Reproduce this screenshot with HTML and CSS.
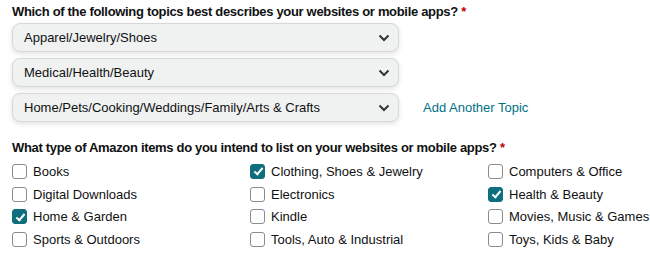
FILE: index.html
```html
<!DOCTYPE html>
<html>
<head>
<meta charset="utf-8">
<link rel="stylesheet" href="styles.css">
</head>
<body>
<div class="form">
  <div class="label">Which of the following topics best describes your websites or mobile apps? <span class="req">*</span></div>
  <div class="topics">
    <div class="topic-row">
      <div class="select"><span>Apparel/Jewelry/Shoes</span><svg class="chev" width="12" height="8" viewBox="0 0 12 8"><path d="M1.5 1.5 L6 6 L10.5 1.5" fill="none" stroke="#333" stroke-width="2"/></svg></div>
    </div>
    <div class="topic-row">
      <div class="select"><span>Medical/Health/Beauty</span><svg class="chev" width="12" height="8" viewBox="0 0 12 8"><path d="M1.5 1.5 L6 6 L10.5 1.5" fill="none" stroke="#333" stroke-width="2"/></svg></div>
    </div>
    <div class="topic-row">
      <div class="select"><span>Home/Pets/Cooking/Weddings/Family/Arts &amp; Crafts</span><svg class="chev" width="12" height="8" viewBox="0 0 12 8"><path d="M1.5 1.5 L6 6 L10.5 1.5" fill="none" stroke="#333" stroke-width="2"/></svg></div>
      <a class="add" href="#">Add Another Topic</a>
    </div>
  </div>

  <div class="label label2">What type of Amazon items do you intend to list on your websites or mobile apps? <span class="req">*</span></div>
  <div class="grid">
    <label class="cb"><span class="box"></span>Books</label>
    <label class="cb"><span class="box on"></span>Clothing, Shoes &amp; Jewelry</label>
    <label class="cb"><span class="box"></span>Computers &amp; Office</label>
    <label class="cb"><span class="box"></span>Digital Downloads</label>
    <label class="cb"><span class="box"></span>Electronics</label>
    <label class="cb"><span class="box on"></span>Health &amp; Beauty</label>
    <label class="cb"><span class="box on"></span>Home &amp; Garden</label>
    <label class="cb"><span class="box"></span>Kindle</label>
    <label class="cb"><span class="box"></span>Movies, Music &amp; Games</label>
    <label class="cb"><span class="box"></span>Sports &amp; Outdoors</label>
    <label class="cb"><span class="box"></span>Tools, Auto &amp; Industrial</label>
    <label class="cb"><span class="box"></span>Toys, Kids &amp; Baby</label>
  </div>
</div>
</body>
</html>
```
FILE: styles.css
```css
html, body {
  margin: 0;
  padding: 0;
  background: #fff;
}
body {
  font-family: "Liberation Sans", Arial, sans-serif;
  font-size: 13px;
  color: #0f1111;
  overflow: hidden;
}
.form {
  padding: 4px 0 0 12px;
}
.label {
  font-weight: bold;
  font-size: 13px;
  line-height: 15px;
  letter-spacing: -0.32px;
}
.req {
  color: #c40000;
}
.topics {
  display: flex;
  flex-direction: column;
  gap: 6px;
  margin-top: 4px;
}
.topic-row {
  display: flex;
  align-items: center;
}
.select {
  box-sizing: border-box;
  width: 387px;
  height: 29px;
  background: #f0f2f2;
  border: 1px solid #d5d9d9;
  border-radius: 8px;
  box-shadow: 0 2px 5px rgba(15, 17, 17, 0.12);
  display: flex;
  align-items: center;
  justify-content: space-between;
  padding: 0 8px 0 11px;
}
.chev {
  display: block;
}
.add {
  margin-left: 24px;
  color: #007185;
  text-decoration: none;
}
.label2 {
  margin-top: 18px;
}
.grid {
  display: grid;
  grid-template-columns: 238px 238px auto;
  grid-auto-rows: 22.7px;
  margin-top: 5px;
}
.cb {
  display: flex;
  align-items: center;
  gap: 6px;
  white-space: nowrap;
}
.box {
  box-sizing: border-box;
  width: 15px;
  height: 15px;
  border: 1px solid #888c8c;
  border-radius: 3px;
  background: #fff;
  flex: none;
  position: relative;
}
.box.on {
  background: #0f6e7e;
  border-color: #0f6e7e;
}
.box.on::after {
  content: "";
  position: absolute;
  left: 4.5px;
  top: 1.5px;
  width: 3px;
  height: 7px;
  border: solid #fff;
  border-width: 0 2px 2px 0;
  transform: rotate(40deg);
}
```
